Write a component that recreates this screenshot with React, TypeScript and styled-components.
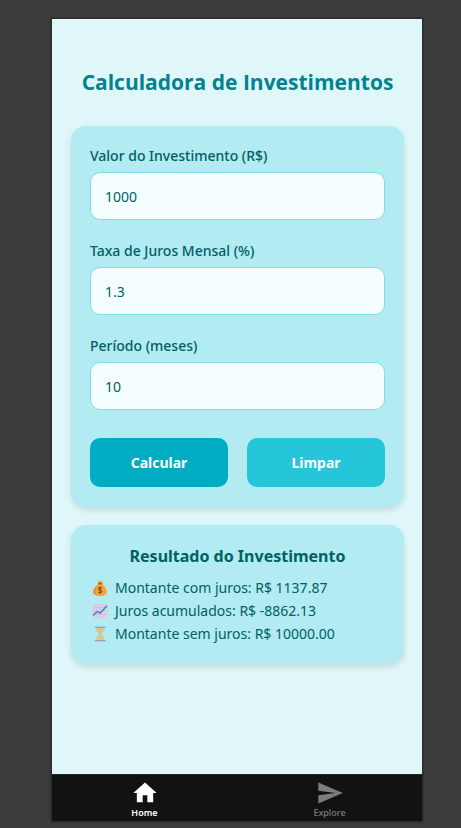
import React, { useState } from "react";
import styled, { createGlobalStyle } from "styled-components";

const GlobalStyle = createGlobalStyle`
  * { box-sizing: border-box; }
  body {
    margin: 0;
    background: #3c3c3c;
    font-family: "Segoe UI", "Noto Sans", "Open Sans", sans-serif;
  }
  h1, h2, ul { margin: 0; padding: 0; }
`;

const Backdrop = styled.div`
  display: flex;
  min-height: 100vh;
  padding: 19px 39px 7px 52px;
`;

const Phone = styled.div`
  display: flex;
  flex: 1;
  min-width: 0;
  flex-direction: column;
  background: #e0f7fa;
  box-shadow: 0 0 2px 1px #242424;
`;

const Screen = styled.main`
  display: flex;
  flex: 1;
  flex-direction: column;
  gap: 18px;
  padding: 47px 18px 18px 19px;
`;

const Title = styled.h1`
  margin-bottom: 10px;
  color: #00838f;
  font-family: "Segoe UI", "Open Sans", "Noto Sans", sans-serif;
  font-size: 21px;
  line-height: 32px;
  font-weight: 700;
  text-align: center;
  white-space: nowrap;
`;

const cardStyle = `
  border-radius: 15px;
  background: #b2ebf2;
  box-shadow: 0 3px 6px rgba(0, 0, 0, 0.12);
`;

const FormCard = styled.form`
  ${cardStyle}
  display: flex;
  flex-direction: column;
  gap: 20px;
  padding: 19px 19px 20px;
`;

const Field = styled.div`
  display: flex;
  flex-direction: column;
  gap: 5px;
`;

const Label = styled.label`
  color: #006064;
  font-size: 14px;
  line-height: 22px;
  font-weight: 500;
`;

const Input = styled.input`
  width: 100%;
  height: 48px;
  padding: 0 14px;
  border: 1px solid #80deea;
  border-radius: 10px;
  outline: none;
  background: #f5feff;
  color: #006064;
  font: inherit;
  font-size: 14px;
`;

const Actions = styled.div`
  display: grid;
  grid-template-columns: 1fr 1fr;
  gap: 19px;
  padding-top: 8px;
`;

const ActionButton = styled.button<{ $color: string }>`
  height: 49px;
  border: 0;
  border-radius: 10px;
  background: ${(p) => p.$color};
  color: #fff;
  font: inherit;
  font-size: 14px;
  font-weight: 700;
  cursor: pointer;
`;

const ResultCard = styled.section`
  ${cardStyle}
  padding: 19px;
  color: #006064;
`;

const ResultTitle = styled.h2`
  margin-bottom: 8px;
  font-size: 16px;
  line-height: 24px;
  font-weight: 700;
  text-align: center;
`;

const ResultList = styled.ul`
  list-style: none;
`;

const ResultItem = styled.li`
  display: flex;
  align-items: center;
  gap: 5px;
  font-size: 14px;
  line-height: 23px;

  svg { flex: none; }
`;

const TabBar = styled.nav`
  display: grid;
  grid-template-columns: 1fr 1fr;
  height: 47px;
  border-top: 1px solid #272729;
  background: #121212;
`;

const Tab = styled.a<{ $active?: boolean }>`
  display: flex;
  flex-direction: column;
  align-items: center;
  padding-top: 4px;
  color: ${(p) => (p.$active ? "#fff" : "#7d7d80")};
  font-size: 9px;
  line-height: 12px;
  font-weight: ${(p) => (p.$active ? 600 : 500)};
  text-decoration: none;
`;

const MoneyBag = () => (
  <svg width="20" height="18" viewBox="0 0 20 18" aria-hidden="true">
    <path d="M7.200 2.200 8.600 3 10 1.200 11.500 3 13 2.300 11.800 5H8.400Z" fill="#f59a22" />
    <path d="M8.300 5h3.600c2.500 2 5 5 5 7.800 0 2.700-2 3.700-6.800 3.700s-6.800-1-6.800-3.700C3.300 10 5.800 7 8.300 5Z" fill="#fca22d" />
    <path d="M5 13c0-3 1.500-5.500 3.500-7.200-3 1.700-5.200 4.400-5.200 7 0 2.700 2 3.700 6.800 3.700 2 0 3.500-.2 4.700-.6C9 16.500 5 16 5 13Z" fill="#ee8424" />
    <path d="M8.400 4.800h3.600" stroke="#7c4a40" strokeWidth="1" strokeLinecap="round" />
    <path d="M11.900 9.200c-.5-.8-3.500-1.100-3.600.6-.1 1.600 3.700 1 3.600 2.800-.1 1.600-3.300 1.500-3.800.3M10.100 7.700v7" fill="none" stroke="#65463c" strokeWidth="1" />
  </svg>
);

const RisingChart = () => (
  <svg width="20" height="18" viewBox="0 0 20 18" aria-hidden="true">
    <rect x="2.500" y="2" width="15" height="14" rx="1" fill="#ddd1e7" />
    <path d="M6 2v14M10 2v14M14 2v14M2.500 5.500h15M2.500 9h15M2.500 12.500h15" stroke="#c9bcd8" strokeWidth=".7" />
    <path d="m3 13.500 4.300-4 2.800 1.700 6.900-7.400" fill="none" stroke="#2589d8" strokeWidth="1.400" strokeLinejoin="round" />
  </svg>
);

const Hourglass = () => (
  <svg width="20" height="18" viewBox="0 0 20 18" aria-hidden="true">
    <path d="M6 2.500h8.500c0 3.200-1.300 4.800-3.100 6.500 1.800 1.700 3.100 3.300 3.100 6.500H6c0-3.200 1.300-4.800 3.100-6.500C7.300 7.300 6 5.700 6 2.500Z" fill="#a9cdf0" />
    <path d="M6.900 3.800h6.700c-.3 2.100-1.500 3.600-3.300 5.200-1.800-1.600-3-3.100-3.400-5.200Z" fill="#ffbf3f" />
    <path d="M9.700 8.500h1.200v3c1.700.8 2.700 1.900 3 3.600H6.700c.3-1.700 1.300-2.800 3-3.600Z" fill="#ffc54a" />
    <path d="M5.300 2.200h9.900M5.300 15.800h9.900" stroke="#9a8a90" strokeWidth="1.100" strokeLinecap="round" />
  </svg>
);

const HomeIcon = () => (
  <svg width="28" height="28" viewBox="0 0 24 24" fill="currentColor" aria-hidden="true">
    <path d="M10 20v-6h4v6h5v-8h3L12 3 2 12h3v8z" />
  </svg>
);

const SendIcon = () => (
  <svg width="28" height="28" viewBox="0 0 24 24" fill="currentColor" aria-hidden="true">
    <path d="M2.010 21 23 12 2.010 3 2 10l15 2-15 2z" />
  </svg>
);

const fields = [
  { id: "valor", label: "Valor do Investimento (R$)" },
  { id: "taxa", label: "Taxa de Juros Mensal (%)" },
  { id: "periodo", label: "Período (meses)" },
] as const;

type Values = Record<(typeof fields)[number]["id"], string>;

const initialResult = { total: 1137.87, interest: -8862.13, plain: 10000 };

export default function App() {
  const [values, setValues] = useState<Values>({ valor: "1000", taxa: "1.3", periodo: "10" });
  const [result, setResult] = useState<typeof initialResult | null>(initialResult);

  const calculate = (event: React.FormEvent) => {
    event.preventDefault();
    const principal = Number(values.valor);
    const months = Number(values.periodo);
    const total = principal * Math.pow(1 + Number(values.taxa) / 100, months);
    const plain = principal * months;
    setResult({ total, interest: total - plain, plain });
  };

  const clear = () => {
    setValues({ valor: "", taxa: "", periodo: "" });
    setResult(null);
  };

  return (
    <>
      <GlobalStyle />
      <Backdrop>
        <Phone>
          <Screen>
            <Title>Calculadora de Investimentos</Title>
            <FormCard onSubmit={calculate}>
              {fields.map(({ id, label }) => (
                <Field key={id}>
                  <Label htmlFor={id}>{label}</Label>
                  <Input
                    id={id}
                    inputMode="decimal"
                    value={values[id]}
                    onChange={(e) => setValues({ ...values, [id]: e.target.value })}
                  />
                </Field>
              ))}
              <Actions>
                <ActionButton type="submit" $color="#00acc1">Calcular</ActionButton>
                <ActionButton type="button" $color="#26c6da" onClick={clear}>Limpar</ActionButton>
              </Actions>
            </FormCard>
            {result && (
              <ResultCard>
                <ResultTitle>Resultado do Investimento</ResultTitle>
                <ResultList>
                  <ResultItem><MoneyBag />Montante com juros: R$ {result.total.toFixed(2)}</ResultItem>
                  <ResultItem><RisingChart />Juros acumulados: R$ {result.interest.toFixed(2)}</ResultItem>
                  <ResultItem><Hourglass />Montante sem juros: R$ {result.plain.toFixed(2)}</ResultItem>
                </ResultList>
              </ResultCard>
            )}
          </Screen>
          <TabBar>
            <Tab href="#home" $active aria-current="page"><HomeIcon /><span>Home</span></Tab>
            <Tab href="#explore"><SendIcon /><span>Explore</span></Tab>
          </TabBar>
        </Phone>
      </Backdrop>
    </>
  );
}
